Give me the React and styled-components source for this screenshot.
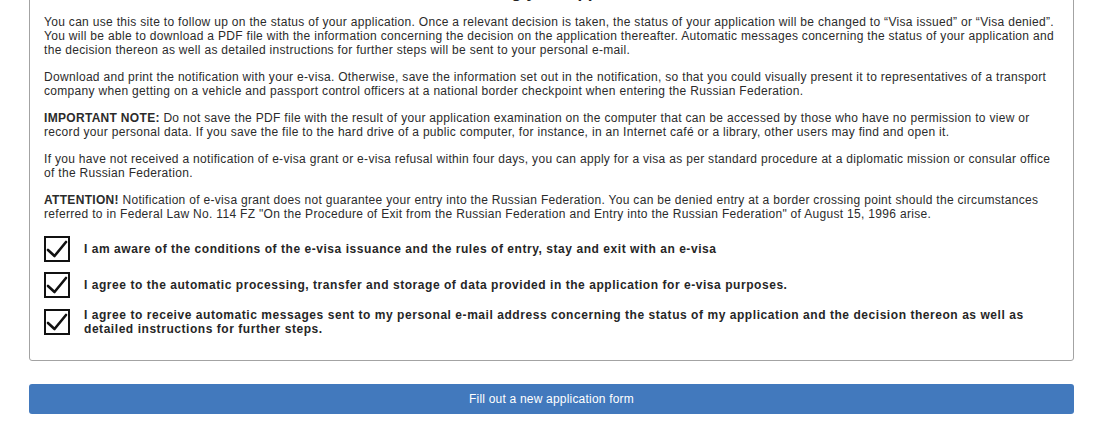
import React from 'react'
import styled, { createGlobalStyle } from 'styled-components'

const GlobalStyle = createGlobalStyle`
    html, body {
        margin: 0;
        padding: 0;
        background: #ffffff;
        overflow: hidden;
    }
    body {
        font-family: "Liberation Sans", Arial, sans-serif;
        color: #222222;
    }
`

const Page = styled.main`
    padding: 0 26px 0 29px;
`

const Panel = styled.section`
    margin-top: -29px;
    padding: 11px 14px 24px;
    border: 1px solid #a3a3a3;
    border-radius: 3px;
`

const Heading = styled.h2`
    margin: 0 0 12px;
    font-size: 17px;
    line-height: 20px;
    font-weight: 700;
    text-align: center;
    color: #222222;
`

const Paragraph = styled.p`
    margin: 0 0 13px;
    font-size: 12px;
    line-height: 14px;
    letter-spacing: 0.31px;
    color: #2b2b2b;
`

const Consents = styled.div`
    display: flex;
    flex-direction: column;
    gap: 10px;
    margin-top: 15px;
`

const Consent = styled.label`
    display: flex;
    align-items: center;
    gap: 14px;
`

const Box = styled.span`
    flex: 0 0 auto;
    display: flex;
    align-items: center;
    justify-content: center;
    width: 26px;
    height: 26px;
    box-sizing: border-box;
    border: 2px solid #111111;
    background: #ffffff;
`

const ConsentText = styled.span`
    font-size: 12px;
    line-height: 14px;
    font-weight: 700;
    letter-spacing: 0.55px;
    color: #262626;
`

const Button = styled.button`
    display: block;
    width: 100%;
    height: 30px;
    margin-top: 23px;
    border: none;
    border-radius: 3px;
    background: #4279bd;
    color: #ffffff;
    font-family: "Liberation Sans", Arial, sans-serif;
    font-size: 12px;
    letter-spacing: 0.2px;
    cursor: pointer;
`

const Check = () => (
    <svg width="22" height="22" viewBox="0 0 22 22">
        <path
            d="M2 12 L8.5 18 L20 4"
            fill="none"
            stroke="#111"
            strokeWidth="2.6"
            strokeLinecap="round"
            strokeLinejoin="round"
        />
    </svg>
)

const CONSENTS = [
    'I am aware of the conditions of the e-visa issuance and the rules of entry, stay and exit with an e-visa',
    'I agree to the automatic processing, transfer and storage of data provided in the application for e-visa purposes.',
    'I agree to receive automatic messages sent to my personal e-mail address concerning the status of my application and the decision thereon as well as detailed instructions for further steps.',
]

export default function App() {
    return (
        <>
            <GlobalStyle />
            <Page>
                <Panel>
                    <Heading>Checking your application</Heading>
                    <Paragraph>
                        You can use this site to follow up on the status of your application. Once a relevant decision is
                        taken, the status of your application will be changed to “Visa issued” or “Visa denied”. You will
                        be able to download a PDF file with the information concerning the decision on the application
                        thereafter. Automatic messages concerning the status of your application and the decision thereon
                        as well as detailed instructions for further steps will be sent to your personal e-mail.
                    </Paragraph>
                    <Paragraph>
                        Download and print the notification with your e-visa. Otherwise, save the information set out in
                        the notification, so that you could visually present it to representatives of a transport company
                        when getting on a vehicle and passport control officers at a national border checkpoint when
                        entering the Russian Federation.
                    </Paragraph>
                    <Paragraph>
                        <b>IMPORTANT NOTE:</b> Do not save the PDF file with the result of your application examination on
                        the computer that can be accessed by those who have no permission to view or record your personal
                        data. If you save the file to the hard drive of a public computer, for instance, in an Internet café
                        or a library, other users may find and open it.
                    </Paragraph>
                    <Paragraph>
                        If you have not received a notification of e-visa grant or e-visa refusal within four days, you can
                        apply for a visa as per standard procedure at a diplomatic mission or consular office of the Russian
                        Federation.
                    </Paragraph>
                    <Paragraph>
                        <b>ATTENTION!</b> Notification of e-visa grant does not guarantee your entry into the Russian
                        Federation. You can be denied entry at a border crossing point should the circumstances referred to
                        in Federal Law No. 114 FZ "On the Procedure of Exit from the Russian Federation and Entry into the
                        Russian Federation" of August 15, 1996 arise.
                    </Paragraph>
                    <Consents>
                        {CONSENTS.map((text) => (
                            <Consent key={text}>
                                <Box>
                                    <Check />
                                </Box>
                                <ConsentText>{text}</ConsentText>
                            </Consent>
                        ))}
                    </Consents>
                </Panel>
                <Button type="button">Fill out a new application form</Button>
            </Page>
        </>
    )
}
